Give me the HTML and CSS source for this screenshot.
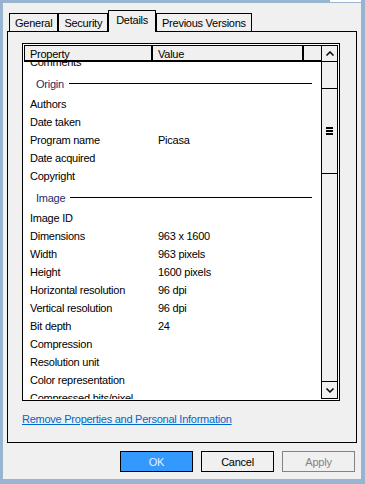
FILE: index.html
```html
<!DOCTYPE html>
<html lang="en">
<head>
    <meta charset="UTF-8">
    <meta name="viewport" content="width=device-width, initial-scale=1.0">
    <title>Properties</title>
    <link rel="stylesheet" href="styles.css">
</head>
<body>
    <div class="frame-top"><span class="caption-btn"></span></div>
    <div class="dialog">
        <div class="tabs">
            <div class="tab">General</div>
            <div class="tab">Security</div>
            <div class="tab active">Details</div>
            <div class="tab">Previous Versions</div>
        </div>
        <div class="panel">
            <div class="listbox">
                <div class="list-main">
                    <div class="list-header">
                        <div class="col-head col-prop">Property</div>
                        <div class="col-head col-value">Value</div>
                        <div class="col-head col-fill"></div>
                    </div>
                    <div class="list-body">
                        <div class="row first"><span>Comments</span><span></span></div>
                        <div class="group">Origin</div>
                        <div class="row"><span>Authors</span><span></span></div>
                        <div class="row"><span>Date taken</span><span></span></div>
                        <div class="row"><span>Program name</span><span>Picasa</span></div>
                        <div class="row"><span>Date acquired</span><span></span></div>
                        <div class="row"><span>Copyright</span><span></span></div>
                        <div class="group">Image</div>
                        <div class="row"><span>Image ID</span><span></span></div>
                        <div class="row"><span>Dimensions</span><span>963 x 1600</span></div>
                        <div class="row"><span>Width</span><span>963 pixels</span></div>
                        <div class="row"><span>Height</span><span>1600 pixels</span></div>
                        <div class="row"><span>Horizontal resolution</span><span>96 dpi</span></div>
                        <div class="row"><span>Vertical resolution</span><span>96 dpi</span></div>
                        <div class="row"><span>Bit depth</span><span>24</span></div>
                        <div class="row"><span>Compression</span><span></span></div>
                        <div class="row"><span>Resolution unit</span><span></span></div>
                        <div class="row"><span>Color representation</span><span></span></div>
                        <div class="row"><span>Compressed bits/pixel</span><span></span></div>
                    </div>
                </div>
                <div class="scrollbar">
                    <div class="sb-btn">
                        <svg width="8" height="5" viewBox="0 0 8 5"><polyline points="0.5,4.5 4,1 7.5,4.5" fill="none" stroke="#000" stroke-width="1.5"/></svg>
                    </div>
                    <div class="sb-gap"></div>
                    <div class="sb-thumb"><span class="grip"></span></div>
                    <div class="sb-track"></div>
                    <div class="sb-btn down">
                        <svg width="8" height="5" viewBox="0 0 8 5"><polyline points="0.5,0.5 4,4 7.5,0.5" fill="none" stroke="#000" stroke-width="1.5"/></svg>
                    </div>
                </div>
            </div>
            <a class="remove-link" href="#">Remove Properties and Personal Information</a>
        </div>
        <div class="buttons">
            <button class="btn default">OK</button>
            <button class="btn">Cancel</button>
            <button class="btn" disabled>Apply</button>
        </div>
    </div>
</body>
</html>
```

FILE: styles.css
```css
body {
    margin: 0;
    height: 484px;
    overflow: hidden;
    background: #99b4d1;
    font-family: "Liberation Sans", Arial, sans-serif;
    font-size: 11px;
    letter-spacing: -0.25px;
    color: #000;
}

.frame-top {
    display: flex;
    justify-content: flex-end;
    height: 3px;
    padding-right: 4px;
}

.caption-btn {
    width: 31px;
    height: 2px;
    background: #fff;
}

.dialog {
    margin: 0 4px 0 3px;
    height: 476px;
    padding: 7px 4px 0 4px;
    box-sizing: border-box;
    background: #f0f0f0;
}

/* Tabs */
.tabs {
    display: flex;
    align-items: flex-end;
    height: 21px;
    padding-left: 2px;
}

.tab {
    height: 18px;
    line-height: 18px;
    padding: 0 5px;
    box-sizing: border-box;
    border: 1px solid #000;
    border-bottom: none;
    white-space: nowrap;
}

.tab.active {
    position: relative;
    z-index: 1;
    height: 22px;
    line-height: 18px;
    padding: 0 7px 3px;
    margin-bottom: -1px;
    background: #f0f0f0;
}

.panel {
    height: 412px;
    box-sizing: border-box;
    border: 1px solid #000;
    padding: 11px 16px 0 14px;
}

/* List view */
.listbox {
    display: flex;
    height: 358px;
    box-sizing: border-box;
    border: 1px solid #000;
    padding: 1px;
    background: #fff;
}

.list-main {
    flex: 1;
    min-width: 0;
    display: flex;
    flex-direction: column;
}

.list-header {
    display: flex;
    flex-shrink: 0;
    height: 17px;
}

.col-head {
    box-sizing: border-box;
    border-top: 1px solid #000;
    border-right: 2px solid #000;
    border-bottom: 2px solid #000;
    background: #f0f0f0;
    line-height: 14px;
    padding: 1px 0 0 5px;
}

.col-prop {
    width: 129px;
    border-left: 1px solid #000;
}

.col-value {
    width: 151px;
}

.col-fill {
    flex: 1;
    border-right: none;
}

.list-body {
    flex: 1;
    overflow: hidden;
}

.row {
    display: grid;
    grid-template-columns: 129px 1fr;
    height: 18px;
    box-sizing: border-box;
    padding-top: 2px;
    line-height: 16px;
    white-space: nowrap;
}

.row span:first-child {
    padding-left: 6px;
}

.row span + span {
    padding-left: 5px;
}

.row.first {
    margin-top: -10px;
}

.group {
    display: flex;
    align-items: center;
    height: 24px;
    box-sizing: border-box;
    padding: 3px 9px 0 12px;
    color: #1c2f6b;
}

.group::after {
    content: "";
    flex: 1;
    margin-left: 5px;
    border-top: 1px solid #000;
}

/* Scrollbar */
.scrollbar {
    display: flex;
    flex-direction: column;
    width: 17px;
    box-sizing: border-box;
    border-left: 1px solid #000;
    border-right: 1px solid #000;
    background: #f0f0f0;
}

.sb-btn {
    display: flex;
    align-items: center;
    justify-content: center;
    height: 17px;
    box-sizing: border-box;
    border-top: 1px solid #000;
    border-bottom: 1px solid #000;
}

.sb-btn.down {
    height: 18px;
}

.sb-gap {
    height: 26px;
}

.sb-thumb {
    display: flex;
    align-items: center;
    justify-content: center;
    height: 86px;
    box-sizing: border-box;
    border-top: 1px solid #000;
    border-bottom: 1px solid #000;
}

.grip {
    width: 7px;
    height: 8px;
    background: repeating-linear-gradient(#000 0 2px, transparent 2px 3px);
}

.sb-track {
    flex: 1;
}

.remove-link {
    display: inline-block;
    margin-top: 11px;
    line-height: 14px;
    color: #0066cc;
}

/* Dialog buttons */
.buttons {
    display: flex;
    justify-content: flex-end;
    gap: 8px;
    margin-top: 8px;
    padding-right: 2px;
}

.btn {
    width: 73px;
    height: 21px;
    padding: 0;
    border: 1px solid #000;
    background: #f0f0f0;
    color: #000;
    font: inherit;
    letter-spacing: inherit;
}

.btn.default {
    background: #3399ff;
    color: #e8f2fc;
}

.btn:disabled {
    border-color: #838383;
    color: #838383;
}
```
